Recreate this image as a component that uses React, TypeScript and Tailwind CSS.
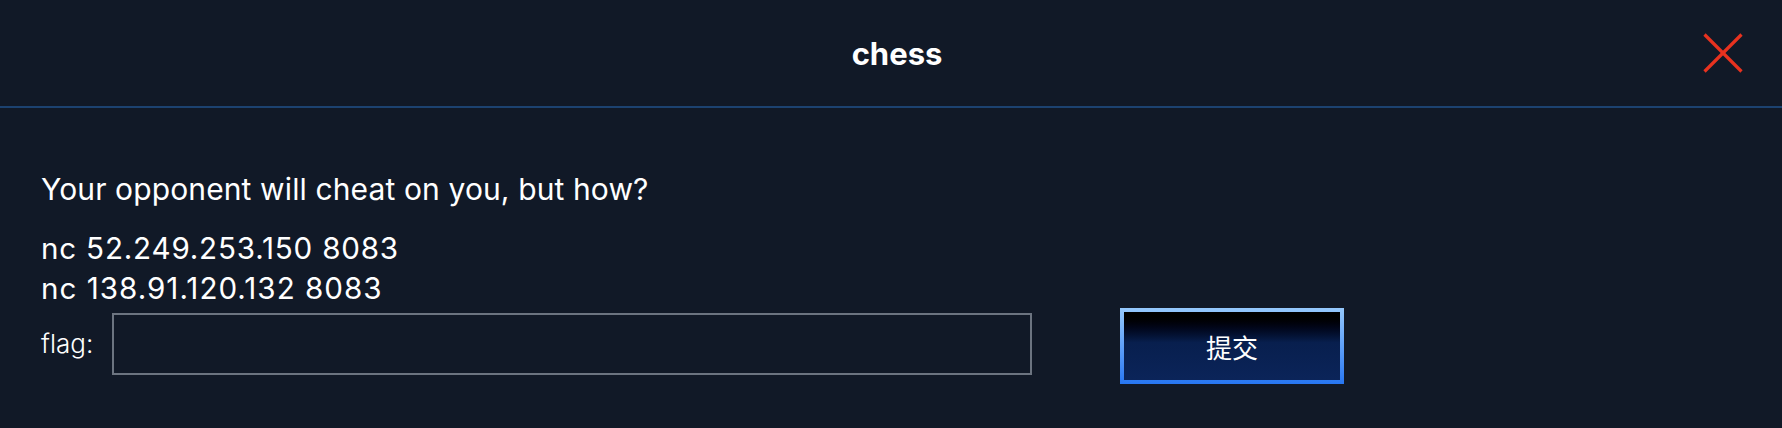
import React from "react";

export default function App() {
  return (
    <div className="w-[1782px] h-[428px] bg-[#111927] font-['Inter',sans-serif] text-white overflow-hidden">
      <div className="relative h-[108px] border-b-2 border-[#1c4270] flex items-center justify-center pl-[12px]">
        <span className="text-[31px] font-bold leading-none">chess</span>
        <button className="absolute right-[39px] top-[33px] w-[40px] h-[40px]" aria-label="close">
          <svg width="40" height="40" viewBox="0 0 40 40">
            <line x1="1.5" y1="1.5" x2="38.5" y2="38.5" stroke="#e8321f" strokeWidth="3.2" />
            <line x1="38.5" y1="1.5" x2="1.5" y2="38.5" stroke="#e8321f" strokeWidth="3.2" />
          </svg>
        </button>
      </div>
      <div className="pl-[41px] pt-[61px]">
        <p className="text-[30px] leading-[40px] tracking-[0.12px]">Your opponent will cheat on you, but how?</p>
        <p className="mt-[19px] text-[29.6px] leading-[40px] tracking-[0.8px]">nc 52.249.253.150 8083</p>
        <p className="text-[29.6px] leading-[40px] tracking-[1px]">nc 138.91.120.132 8083</p>
        <div className="flex items-start">
          <label className="mt-[22px] text-[26px] leading-[28px] w-[71px] font-light">flag:</label>
          <input
            type="text"
            className="mt-[5px] w-[920px] h-[62px] border-2 border-[#6c7480] bg-transparent outline-none"
          />
          <div className="ml-[88px] w-[224px] h-[76px] p-[4px] bg-gradient-to-b from-[#95c8fc] to-[#2776f2]">
            <div className="w-full h-full flex items-center justify-center bg-gradient-to-b from-[#000000] via-[#081f4e] via-45% to-[#0b2459] text-[26px] font-['Noto_Sans_CJK_SC',sans-serif]">
              提交
            </div>
          </div>
        </div>
      </div>
    </div>
  );
}
